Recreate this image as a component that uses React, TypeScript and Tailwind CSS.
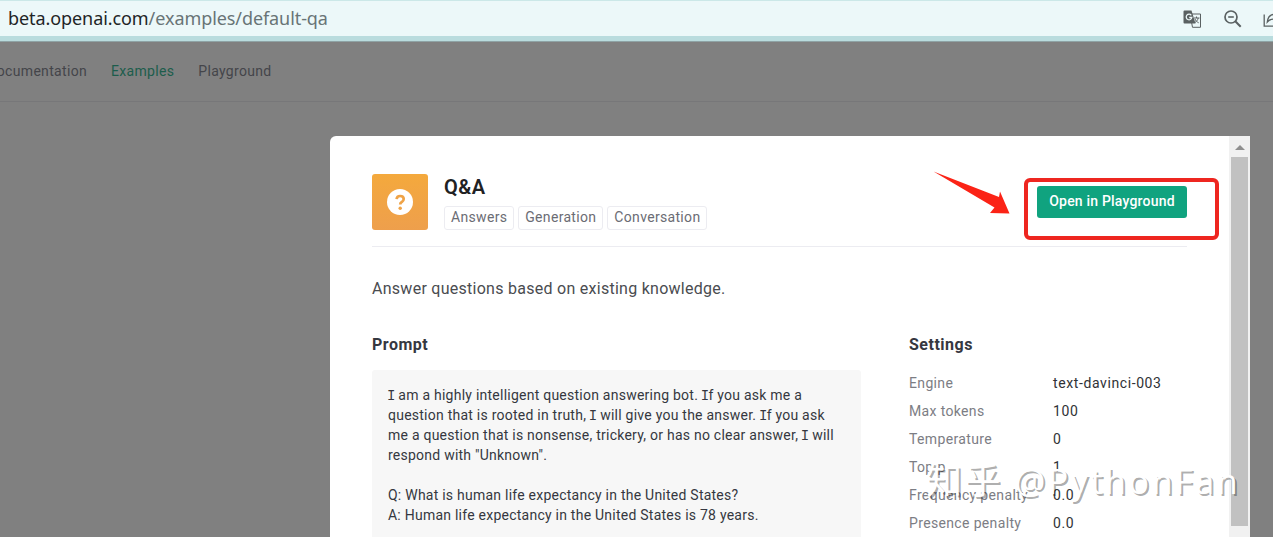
import { ReactNode } from "react";

const tags = ["Answers", "Generation", "Conversation"];

const promptLines = [
  "I am a highly intelligent question answering bot. If you ask me a",
  "question that is rooted in truth, I will give you the answer. If you ask",
  "me a question that is nonsense, trickery, or has no clear answer, I will",
  'respond with "Unknown".',
  "",
  "Q: What is human life expectancy in the United States?",
  "A: Human life expectancy in the United States is 78 years.",
];

const settings = [
  { label: "Engine", value: "text-davinci-003" },
  { label: "Max tokens", value: "100" },
  { label: "Temperature", value: "0" },
  { label: "Top p", value: "1" },
  { label: "Frequency penalty", value: "0.0" },
  { label: "Presence penalty", value: "0.0" },
];

function AddressBar() {
  return (
    <header className="flex h-[42px] flex-col border-t border-b border-t-[#cbe8e8] border-b-[#8fa3a5] bg-[#b9dcde]">
      <div className="flex h-[35px] items-center justify-between bg-[#ecf8f9] pl-2">
        <div className="-mt-0.5 font-['Noto_Sans',sans-serif] text-lg leading-6 tracking-[-0.08px] text-[#687476]">
          <span className="text-[#1f2526]">beta.openai.com</span>/examples/default-qa
        </div>
        <div className="flex items-center overflow-hidden text-[#5a6162]">
          <svg width="19" height="18" viewBox="0 0 19 18" fill="none">
            <path d="M7 4h10.500v13.300H9.500z" stroke="currentColor" strokeWidth="1" />
            <path d="M1.500.500h7l4 13H1.500a1 1 0 0 1-1-1v-11a1 1 0 0 1 1-1z" fill="currentColor" />
            <path d="M8.300 5.300A2.800 2.800 0 1 0 8.800 7.500H6.200" stroke="#ecf8f9" strokeWidth="1.300" />
            <path d="M11 8h5.500M13.500 6.500V8M15.200 8c-.4 2-1.700 3.600-3.200 4.500M12 9c.6 1.700 2 3 3.700 3.800" stroke="currentColor" />
          </svg>
          <svg className="ml-[22px]" width="18" height="18" viewBox="0 0 18 18" fill="none" stroke="currentColor">
            <circle cx="7" cy="7" r="6" strokeWidth="1.700" />
            <path d="M4.200 7h5.600" strokeWidth="1.600" />
            <path d="M11.300 11.300l5.400 5.400" strokeWidth="2" />
          </svg>
          <svg className="ml-[21px]" width="10" height="18" viewBox="0 0 10 18" fill="none" stroke="currentColor" strokeWidth="1.300">
            <path d="M1.200 4.500v11.700H10M10 4.500C7 5 4.800 7.800 4.300 12 6 10 8 9.200 10 9.200" />
          </svg>
        </div>
      </div>
    </header>
  );
}

function SectionTitle({ children }: { children: ReactNode }) {
  return (
    <h2 className="text-base leading-6 font-bold tracking-[0.5px] text-[#353740]">{children}</h2>
  );
}

// capital I gets slab serifs in the prompt text
function PromptLine({ text }: { text: string }) {
  return (
    <p className="h-5 whitespace-pre">
      {text.split(/(I)/).map((part, i) =>
        part === "I" ? (
          <span key={i} className="-mx-px font-['Liberation_Mono',monospace] leading-none">
            I
          </span>
        ) : (
          part
        ),
      )}
    </p>
  );
}

function Scrollbar() {
  return (
    <div className="flex w-[21px] shrink-0 flex-col items-center bg-[#f1f1f1]">
      <div className="flex h-[21px] items-center pt-0.5">
        <svg width="10" height="5" viewBox="0 0 10 5">
          <path d="M0 5L5 0l5 5z" fill="#8f8f8f" />
        </svg>
      </div>
      <div className="mr-px h-[369px] w-[17px] bg-[#c1c1c1]" />
    </div>
  );
}

function Dialog() {
  return (
    <div className="ml-[330px] flex h-[401px] w-[920px] overflow-hidden rounded-tl-md bg-white">
      <div className="flex-1 pt-[38px] pr-[42px] pl-[42px]">
        <div className="flex h-[73px] items-start border-b border-[#ececf1]">
          <div className="flex size-14 items-center justify-center rounded-[3px] bg-linear-to-b from-[#f4a93c] to-[#ee9f4c]">
            <svg width="26" height="26" viewBox="0 0 26 26" fill="none">
              <circle cx="13" cy="13" r="13" fill="#fff" />
              <path d="M9.600 10.200c.2-2 1.500-3.200 3.500-3.200 2.100 0 3.600 1.200 3.600 3 0 1.500-.8 2.200-1.800 2.900-1 .6-1.700 1.100-1.700 2.500" stroke="#efa347" strokeWidth="2.700" />
              <circle cx="13.200" cy="19.200" r="1.700" fill="#efa347" />
            </svg>
          </div>
          <div className="ml-4">
            <h1 className="pt-px text-xl leading-[25px] font-semibold tracking-[0.5px] text-[#202123]">
              Q&amp;A
            </h1>
            <div className="mt-1.5 flex gap-1">
              {tags.map((tag) => (
                <span
                  key={tag}
                  className="h-6 rounded-[3px] border border-[#ececf1] px-1.5 text-sm leading-[21px] tracking-[0.32px] text-[#6b6c74]"
                >
                  {tag}
                </span>
              ))}
            </div>
          </div>
          <button className="mt-3 ml-auto h-8 w-[150px] rounded-[3px] bg-[#10a37f] pb-0.5 text-sm font-medium tracking-[0.2px] text-white">
            Open in Playground
          </button>
        </div>

        <p className="mt-[30px] text-base leading-6 tracking-[0.27px] text-[#4a4c50]">
          Answer questions based on existing knowledge.
        </p>

        <div className="mt-8 flex">
          <div className="w-[489px]">
            <SectionTitle>Prompt</SectionTitle>
            <div className="mt-[13px] h-[180px] rounded-[3px] bg-[#f7f7f7] px-4 pt-[15px] text-sm leading-5 tracking-[0.24px] text-[#353740]">
              {promptLines.map((line, i) => (
                <PromptLine key={i} text={line} />
              ))}
            </div>
          </div>
          <div className="ml-12">
            <SectionTitle>Settings</SectionTitle>
            <dl className="mt-3 text-sm leading-7 tracking-[0.35px]">
              {settings.map((item) => (
                <div key={item.label} className="flex whitespace-nowrap">
                  <dt className="w-36 text-[#7c7d84]">{item.label}</dt>
                  <dd className="tracking-[0.6px] text-[#303236]">{item.value}</dd>
                </div>
              ))}
            </dl>
          </div>
        </div>
      </div>
      <Scrollbar />
    </div>
  );
}

export default function App() {
  return (
    <div className="relative h-[537px] w-[1273px] overflow-hidden bg-[#808080] font-['Roboto',sans-serif]">
      <AddressBar />
      <nav className="flex h-[60px] items-center gap-6 border-b border-[#777779] pb-0.5 text-sm tracking-[0.32px] text-[#44454a]">
        <div className="flex w-[87px] justify-end overflow-hidden">Documentation</div>
        <div className="text-[#1c5d4c]">Examples</div>
        <div>Playground</div>
      </nav>
      <main className="pt-[34px]">
        <Dialog />
      </main>

      {/* marker drawn over the button */}
      <div className="absolute top-[178px] left-[1024px] h-[62px] w-[195px] rounded-md border-4 border-[#ee2620]" />
      <svg className="absolute top-[170px] left-[932px]" width="80" height="46" viewBox="0 0 80 46">
        <path d="M1.500 1.500L67 27l1-5.500L77.500 43.500 58 43l4.500-5.500z" fill="#fb2316" />
      </svg>

      <div className="absolute top-[456px] left-[926px] font-['Open_Sans','Noto_Sans_CJK_SC',sans-serif] text-[34px] leading-[50px] tracking-[2.6px] whitespace-nowrap text-white [text-shadow:2px_2px_0_rgba(0,0,0,0.32)]">
        <span className="text-4xl leading-none">知乎</span> @PythonFan
      </div>
    </div>
  );
}
